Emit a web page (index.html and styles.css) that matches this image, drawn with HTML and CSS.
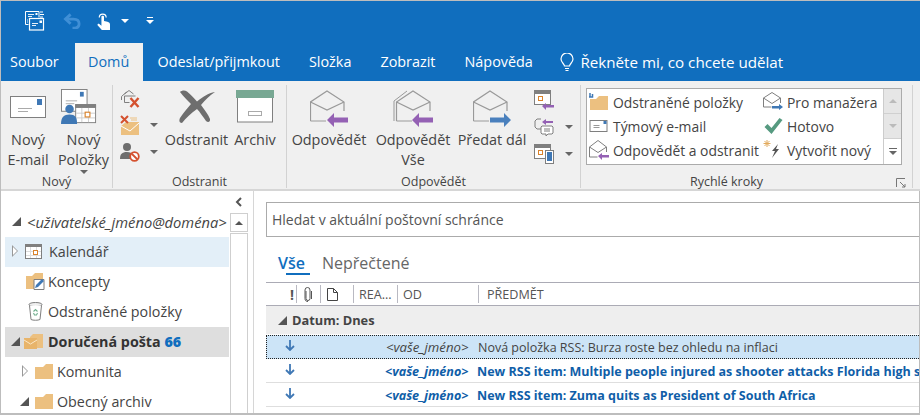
FILE: index.html
```html
<!DOCTYPE html>
<html lang="cs">
<head>
  <meta charset="UTF-8">
  <title>Doručená pošta - Outlook</title>
  <link rel="stylesheet" href="styles.css">
</head>
<body>
<div class="window">

  <!-- quick access bar -->
  <div class="qat">
    <svg width="20" height="20" viewBox="0 0 20 20" fill="none" stroke="#fff">
      <path d="M3.500 13.500H.5V.5H14v6"/>
      <path d="M3 3.500h6M3 5.500h4M2 9h1M2 11h1" stroke-width=".9"/>
      <path fill="#fff" stroke="none" d="M10.500 2h2v2h-2zM15 .5h3v1h-3zM15 3h4v1h-4zM15 5.500h3v1h-3z"/>
      <rect x="4.500" y="7.500" width="14" height="11.500" stroke-width="1.200"/>
      <path d="M7 12.500h6M7 14.500h4" stroke-width=".9"/>
      <path fill="#fff" stroke="none" d="M14.500 9.500h2.500v2.500h-2.500z"/>
    </svg>
    <svg class="qat-undo" width="19" height="16" viewBox="0 0 20 17" fill="none" stroke="#3f8fd6" stroke-width="3">
      <path d="M8 1.500 2.500 6.500 8 11.500"/><path d="M3 6.500h8c4 0 6 2 6 5s-2 4.500-5 4.500h-2"/>
    </svg>
    <svg class="qat-touch" width="14" height="18" viewBox="0 0 16 21">
      <path fill="none" stroke="#fff" stroke-width="1.400" d="M2.500 6.500a4 4 0 1 1 8 0"/>
      <path fill="#fff" d="M5 5.500c0-1.500 3-1.500 3 0v5l4 1c2 .5 3 1.500 3 3V21H5.500L.5 15.500c-.5-1.500 1-2.500 2-1.500L5 16z"/>
    </svg>
    <span class="caret caret-white qat-caret"></span>
    <span class="qat-more"><span class="qat-more-bar"></span><span class="caret caret-white"></span></span>
  </div>

  <!-- tabs -->
  <div class="tabs">
    <span class="tab tab-file">Soubor</span>
    <span class="tab tab-active">Domů</span>
    <span class="tab">Odeslat/přijmkout</span>
    <span class="tab">Složka</span>
    <span class="tab">Zobrazit</span>
    <span class="tab">Nápověda</span>
    <span class="tab tab-tell">
      <svg width="14" height="19" viewBox="0 0 14 19" fill="none" stroke="#fff" stroke-width="1.200">
        <path d="M4.500 13c0-2-3.500-3.500-3.500-7a6 6 0 0 1 12 0c0 3.500-3.500 5-3.500 7z"/><path d="M5 15.500h4M5.500 17.500h3"/>
      </svg>
      Řekněte mi, co chcete udělat
    </span>
  </div>

  <!-- ribbon -->
  <div class="ribbon">

    <div class="group group-new">
      <div class="group-body">
        <div class="big-btn btn-email">
          <div class="big-icon">
            <svg width="36" height="23" viewBox="0 0 36 23">
              <rect x=".5" y=".5" width="35" height="21" fill="#fff" stroke="#7f7f7f"/>
              <rect x="27" y="3" width="5" height="6" fill="#3f78b5"/>
              <path d="M8 12.500h14M8 15.500h10" stroke="#aaa"/>
            </svg>
          </div>
          <span class="big-label">Nový<br>E-mail</span>
        </div>
        <div class="big-btn btn-items">
          <div class="big-icon">
            <svg width="36" height="36" viewBox="0 0 38 38">
              <rect x=".5" y=".5" width="27" height="23" fill="#fff" stroke="#7f7f7f"/>
              <rect x="20" y="3" width="4" height="5" fill="#3f78b5"/>
              <path d="M5 12.500h12M5 15.500h9" stroke="#aaa"/>
              <rect x="15.500" y="16.500" width="21" height="19" fill="#fff" stroke="#7f7f7f"/>
              <rect x="15" y="16" width="22" height="4" fill="#7f7f7f"/>
              <path d="M22 20v15M29 20v15M16 25.500h20M16 30.500h20" stroke="#ccc"/>
              <rect x="25.500" y="24.500" width="5" height="5" fill="#fff" stroke="#d9822b" stroke-width="1.200"/>
              <circle cx="9" cy="21" r="4.500" fill="#3f78b5"/>
              <path d="M0 37c0-7 3-10 9-10s8 3 8 10z" fill="#3f78b5"/>
            </svg>
          </div>
          <span class="big-label">Nový<br>Položky</span>
          <span class="caret caret-gray"></span>
        </div>
      </div>
      <div class="group-label">Nový</div>
    </div>

    <div class="group group-delete">
      <div class="group-body">
        <div class="small-col col-delete">
          <div class="small-row">
            <svg width="20" height="19" viewBox="0 0 20 19" fill="none">
              <path d="M4.500 5 9 1.500 13.500 5M1.500 11V7.500L6.500 3M4.500 13.500V7h11M4.500 13.500h5" stroke="#7f7f7f"/>
              <path d="M10.500 9l8 9M18.500 9l-8 9" stroke="#d4512f" stroke-width="2.400"/>
            </svg>
          </div>
          <div class="small-row">
            <svg width="20" height="20" viewBox="0 0 20 20">
              <path d="M6 7h13v13H1v-9z" fill="#ecc080"/>
              <path d="M1 11l9 5 9-8" fill="none" stroke="#fff"/>
              <path d="M10 3h7M11 5h6" stroke="#ecc080"/>
              <path d="M1 1l7 7M8 1 1 8" stroke="#d4512f" stroke-width="2"/>
            </svg>
            <span class="caret caret-gray"></span>
          </div>
          <div class="small-row">
            <svg width="20" height="20" viewBox="0 0 20 20">
              <circle cx="7" cy="5" r="4" fill="#6e6e6e"/>
              <path d="M0 17c0-5 2-7 7-7 3 0 5 1 5 3v4z" fill="#6e6e6e"/>
              <circle cx="14.500" cy="14.500" r="4.300" fill="#fff" stroke="#d4512f" stroke-width="1.800"/>
              <path d="M11.500 11.500l6 6" stroke="#d4512f" stroke-width="1.800"/>
            </svg>
            <span class="caret caret-gray"></span>
          </div>
        </div>
        <div class="big-btn btn-delete">
          <div class="big-icon">
            <svg width="36" height="34" viewBox="0 0 36 34">
              <path d="M1 2c2-2 5-2 7-.500 4 3 7 7 10 10C24 7 29 3 36 2 30 6 26 10 22 15c3 4 7 9 9 14 .5 3-2 4-4 2-3-4-6-9-9-12C12 23 7 28 3 33 0 33 0 30 1 28c3-5 7-9 11-14C8 10 4 6 1 2z" fill="#6e6e6e"/>
            </svg>
          </div>
          <span class="big-label">Odstranit</span>
        </div>
        <div class="big-btn btn-archive">
          <div class="big-icon">
            <svg width="38" height="33" viewBox="0 0 38 33">
              <rect x="1.500" y="4" width="35" height="28" fill="#fff" stroke="#7f7f7f"/>
              <rect x="0" y="0" width="38" height="8" fill="#78a893"/>
              <rect x="12.500" y="21.500" width="13" height="4" fill="#fff" stroke="#aaa"/>
            </svg>
          </div>
          <span class="big-label">Archiv</span>
        </div>
      </div>
      <div class="group-label">Odstranit</div>
    </div>

    <div class="group group-respond">
      <div class="group-body">
        <div class="big-btn btn-reply">
          <div class="big-icon">
            <svg width="38" height="38" viewBox="0 0 38 38">
              <use href="#env-open"/>
              <path d="M17 30l7-7v4.500h14v5H24V37z" fill="#9461b4"/>
            </svg>
          </div>
          <span class="big-label">Odpovědět</span>
        </div>
        <div class="big-btn btn-replyall">
          <div class="big-icon">
            <svg width="40" height="38" viewBox="0 0 40 38">
              <path d="M14 1 1 11v20" fill="none" stroke="#999"/>
              <g transform="translate(3)"><use href="#env-open"/></g>
              <path d="M19 30l7-7v4.500h14v5H26V37z" fill="#9461b4"/>
            </svg>
          </div>
          <span class="big-label">Odpovědět<br>Vše</span>
        </div>
        <div class="big-btn btn-forward">
          <div class="big-icon">
            <svg width="38" height="38" viewBox="0 0 38 38">
              <use href="#env-open"/>
              <path d="M38 30l-7-7v4.500H17v5h14V37z" fill="#4a80bd"/>
            </svg>
          </div>
          <span class="big-label">Předat dál</span>
        </div>
        <div class="small-col col-respond">
          <div class="small-row">
            <svg width="20" height="20" viewBox="0 0 20 20">
              <rect x=".5" y=".5" width="16" height="14" fill="#fff" stroke="#7f7f7f"/>
              <rect x="0" y="0" width="17" height="4" fill="#7f7f7f"/>
              <rect x="4.500" y="6.500" width="4" height="4" fill="#fff" stroke="#d9822b"/>
              <path d="M8 16l4-3v2h8v2.500h-8V20z" fill="#9461b4"/>
            </svg>
          </div>
          <div class="small-row">
            <svg width="20" height="20" viewBox="0 0 20 20" fill="none">
              <path d="M7 12H3L1 10V4l2-2h4" stroke="#7f7f7f"/>
              <path d="M8 5l4-3v2h7v2h-7v2z" fill="#9461b4"/>
              <path d="M8 9h10l1 1v6l-1 1h-4l-2 2v-2H8l-1-1v-6z" fill="#fff" stroke="#7f7f7f"/>
              <path d="M10 12h6M10 14h6" stroke="#7f7f7f"/>
            </svg>
            <span class="caret caret-gray"></span>
          </div>
          <div class="small-row">
            <svg width="20" height="20" viewBox="0 0 20 20">
              <rect x=".5" y=".5" width="16" height="14" fill="#fff" stroke="#7f7f7f"/>
              <rect x="0" y="0" width="17" height="4" fill="#7f7f7f"/>
              <rect x="4.500" y="6.500" width="4" height="4" fill="#fff" stroke="#d9822b"/>
              <rect x="11.500" y="6.500" width="8" height="13" fill="#fff" stroke="#7f7f7f"/>
              <rect x="13" y="8" width="5" height="9" fill="#3f78b5"/>
            </svg>
            <span class="caret caret-gray"></span>
          </div>
        </div>
      </div>
      <div class="group-label">Odpovědět</div>
    </div>

    <div class="group group-steps">
      <div class="group-body">
        <div class="gallery">
          <div class="steps">
            <div class="step">
              <svg width="20" height="18" viewBox="0 0 20 18">
                <path d="M1 6h6l3-3h9v14H1z" fill="#ecc080"/>
                <path d="M1 0v3.500M3.500 1v3h-4" fill="none" stroke="#3f78b5" stroke-width="1.500"/>
              </svg>
              <span>Odstraněné položky</span>
            </div>
            <div class="step">
              <svg width="19" height="18" viewBox="0 0 19 18" fill="none">
                <rect x=".5" y="3.500" width="17" height="11" fill="#fff" stroke="#7f7f7f"/>
                <path d="M4 8.500h6M4 10.500h6" stroke="#999"/>
                <rect x="14" y="4" width="3" height="3" fill="#3f78b5"/>
              </svg>
              <span>Týmový e-mail</span>
            </div>
            <div class="step">
              <svg width="20" height="20" viewBox="0 0 20 20" fill="none">
                <path d="M.5 17V7L9 .5 17.500 7v5M.5 7 9 12.500 17.500 7M.5 17h8" stroke="#7f7f7f"/>
                <path d="M9 16l4-3v2h7v2.500h-7V20z" fill="#9461b4"/>
              </svg>
              <span>Odpovědět a odstranit</span>
            </div>
            <div class="step">
              <svg width="20" height="20" viewBox="0 0 20 20" fill="none">
                <path d="M.5 15V6L9 .5 17.500 6v5M.5 6 9 11.500 17.500 6M.5 15h8" stroke="#7f7f7f"/>
                <path d="M20 15l-4-3v2H9v2.500h7V18z" fill="#3f78b5"/>
              </svg>
              <span>Pro manažera</span>
            </div>
            <div class="step">
              <svg width="19" height="18" viewBox="0 0 19 18">
                <path d="M1 10l3-3 4 4L16 1l3 2-11 14z" fill="#569a80"/>
              </svg>
              <span>Hotovo</span>
            </div>
            <div class="step">
              <svg width="20" height="20" viewBox="0 0 20 20">
                <path d="M4 0v7M.5 3.500h7M1.500 1l5 5M6.500 1l-5 5" stroke="#e2aa5c" fill="none"/>
                <path d="M15 4 9 11h3l-3 7 7-9h-3z" fill="#555"/>
              </svg>
              <span>Vytvořit nový</span>
            </div>
          </div>
          <div class="gallery-scroll">
            <span class="scroll-btn"><span class="caret caret-up caret-pale"></span></span>
            <span class="scroll-btn"><span class="caret caret-pale"></span></span>
            <span class="scroll-more"><span class="more-bar"></span><span class="caret caret-gray"></span></span>
          </div>
        </div>
      </div>
      <div class="group-label">Rychlé kroky</div>
      <svg class="launcher" width="10" height="10" viewBox="0 0 10 10" fill="none" stroke="#777">
        <path d="M.5 9V.5H9"/><path d="M4 4l5 5M9 6v3H6"/>
      </svg>
    </div>
  </div>

  <!-- shared envelope shape -->
  <svg class="defs" width="0" height="0">
    <defs>
      <g id="env-open" fill="none" stroke="#999" stroke-width="1.200">
        <path d="M.5 31V12L17 1l17 11v9M.5 31H16"/>
        <path d="M.5 12 17 20l17-8"/>
      </g>
    </defs>
  </svg>

  <div class="main">
    <!-- folder pane -->
    <div class="nav">
      <div class="nav-tree">
        <div class="nav-account">
          <span class="tri-open"></span>
          <em>&lt;uživatelské_jméno@doména&gt;</em>
        </div>
        <div class="nav-row nav-hover">
          <span class="tri-closed"></span>
          <svg width="17" height="15" viewBox="0 0 17 15">
            <rect x=".5" y=".5" width="16" height="14" fill="#fff" stroke="#7f7f7f"/>
            <rect x="0" y="0" width="17" height="3" fill="#7f7f7f"/>
            <path d="M5.500 3v11M11.500 3v11M1 7.500h15M1 11.500h15" stroke="#ddd"/>
            <rect x="8.500" y="6.500" width="4" height="4" fill="#fff" stroke="#d9822b"/>
          </svg>
          <span>Kalendář</span>
        </div>
        <div class="nav-row nav-plain">
          <svg width="19" height="18" viewBox="0 0 19 18">
            <path d="M0 4h6l3-3h8v16H0z" fill="#ecc080"/>
            <path d="M8 7.500h10v10H8z" fill="#fff" stroke="#7f7f7f"/>
            <path d="M9 16l1-3 6-6 2 2-6 6z" fill="#3f78b5"/>
          </svg>
          <span>Koncepty</span>
        </div>
        <div class="nav-row nav-plain">
          <svg width="15" height="19" viewBox="0 0 15 19" fill="none" stroke="#7f7f7f">
            <path d="M1 3.500h13"/><ellipse cx="7.500" cy="2.500" rx="6.500" ry="2" fill="#eee"/>
            <path d="M1.500 3.500 3 17.500c2 1 7 1 9 0l1.500-14" fill="#fff"/>
            <path d="M5.500 9.500l2-2 2 2M9.500 11l-1 2h-2l-1-2" stroke="#6fae8d" stroke-width="1.100"/>
          </svg>
          <span>Odstraněné položky</span>
        </div>
        <div class="nav-row nav-selected">
          <span class="tri-open"></span>
          <svg width="20" height="16" viewBox="0 0 20 16">
            <path d="M6 4l3-3h10v14H6z" fill="#ecc080"/>
            <path d="M0 5h13v11H0z" fill="#e8b46a"/>
            <path d="M0 7l6.500 4L13 7" fill="none" stroke="#fbe7c6"/>
          </svg>
          <span class="nav-inbox">Doručená pošta <b>66</b></span>
        </div>
        <div class="nav-row nav-child">
          <span class="tri-closed"></span>
          <svg class="folder" width="18" height="16" viewBox="0 0 18 16"><path d="M0 4h8l3-3h7v15H0z" fill="#ecc080"/></svg>
          <span>Komunita</span>
        </div>
        <div class="nav-row nav-child">
          <span class="tri-open"></span>
          <svg class="folder" width="18" height="16" viewBox="0 0 18 16"><path d="M0 4h8l3-3h7v15H0z" fill="#ecc080"/></svg>
          <span>Obecný archiv</span>
        </div>
      </div>
      <div class="nav-side">
        <svg class="nav-collapse" width="8" height="10" viewBox="0 0 8 10" fill="none" stroke="#555" stroke-width="2">
          <path d="M6 1 2 5l4 4"/>
        </svg>
        <div class="nav-scroll">
          <span class="nav-scroll-up"><span class="caret caret-up caret-dark"></span></span>
          <span class="nav-scroll-track"></span>
        </div>
      </div>
    </div>

    <!-- mail list -->
    <div class="content">
      <div class="search-wrap">
        <div class="search">Hledat v aktuální poštovní schránce</div>
      </div>
      <div class="filters">
        <span class="filter filter-on">Vše</span>
        <span class="filter">Nepřečtené</span>
      </div>
      <div class="list">
        <div class="list-head">
          <span class="col col-imp">!</span>
          <span class="col col-clip">
            <svg width="10" height="15" viewBox="0 0 10 15" fill="none" stroke="#555">
              <path d="M3 4v7.500a2 2 0 0 0 4 0V3a2.500 2.500 0 0 0-5 0v8.500c0 2 1 3 3 3"/><path d="M8.500 4v8"/>
            </svg>
          </span>
          <span class="col col-doc">
            <svg width="11" height="13" viewBox="0 0 11 13" fill="none" stroke="#444">
              <path d="M.5.5h6l4 4v8H.5zM6.500.5v4h4"/>
            </svg>
          </span>
          <span class="col col-read">REA...</span>
          <span class="col col-from">OD</span>
          <span class="col col-subject">PŘEDMĚT</span>
        </div>
        <div class="list-group">
          <span class="tri-open"></span>
          Datum: Dnes
        </div>
        <div class="mail mail-selected">
          <svg class="mail-arrow" width="10" height="11" viewBox="0 0 10 11" fill="none" stroke="#3f78b5" stroke-width="1.800">
            <path d="M5 0v10M1 6l4 4 4-4"/>
          </svg>
          <em class="mail-from">&lt;vaše_jméno&gt;</em>
          <span class="mail-subject">Nová položka RSS: Burza roste bez ohledu na inflaci</span>
        </div>
        <div class="mail mail-unread">
          <svg class="mail-arrow" width="10" height="11" viewBox="0 0 10 11" fill="none" stroke="#3f78b5" stroke-width="1.800">
            <path d="M5 0v10M1 6l4 4 4-4"/>
          </svg>
          <em class="mail-from">&lt;vaše_jméno&gt;</em>
          <span class="mail-subject">New RSS item: Multiple people injured as shooter attacks Florida high school</span>
        </div>
        <div class="mail mail-unread">
          <svg class="mail-arrow" width="10" height="11" viewBox="0 0 10 11" fill="none" stroke="#3f78b5" stroke-width="1.800">
            <path d="M5 0v10M1 6l4 4 4-4"/>
          </svg>
          <em class="mail-from">&lt;vaše_jméno&gt;</em>
          <span class="mail-subject">New RSS item: Zuma quits as President of South Africa</span>
        </div>
      </div>
    </div>
  </div>
</div>
</body>
</html>
```
FILE: styles.css
```css
* {
  box-sizing: border-box;
}
html, body {
  margin: 0;
  height: 100%;
  overflow: hidden;
}
body {
  font-family: "Open Sans", "Noto Sans", sans-serif;
  font-size: 14px;
  color: #444;
  background: #fff;
}
svg {
  display: block;
  flex: none;
}
.defs {
  position: absolute;
}

.window {
  width: 920px;
  height: 415px;
  display: flex;
  flex-direction: column;
  border: 1px solid #bdbdbd;
  border-right: 0;
  overflow: hidden;
}

/* carets */
.caret {
  display: block;
  width: 0;
  height: 0;
  border-left: 4px solid transparent;
  border-right: 4px solid transparent;
  border-top: 4px solid #666;
}
.caret-white {
  border-top-color: #fff;
}
.caret-up {
  border-top: 0;
  border-bottom: 4px solid #666;
}
.caret-pale {
  border-top-color: #bbb;
  border-bottom-color: #bbb;
}
.caret-dark {
  border-bottom-color: #555;
}

/* title bar */
.qat {
  height: 42px;
  flex: none;
  background: #106ebe;
  display: flex;
  align-items: center;
  padding: 0 0 3px 24px;
}
.qat-undo {
  margin-left: 18px;
}
.qat-touch {
  margin-left: 15px;
}
.qat-caret {
  margin-left: 10px;
}
.qat-more {
  margin-left: 17px;
  display: flex;
  flex-direction: column;
  gap: 2px;
}
.qat-more-bar {
  width: 6px;
  height: 1px;
  margin-left: 1px;
  background: #fff;
}

.tabs {
  height: 38px;
  flex: none;
  background: #106ebe;
  display: flex;
  color: #fff;
  font-size: 14.4px;
}
.tab {
  padding: 0 14.5px;
  line-height: 37px;
}
.tab-file {
  width: 74px;
  padding: 0 0 0 9px;
}
.tab-active {
  background: #f0f0f0;
  color: #106ebe;
  width: 68px;
  padding: 0 0 0 13px;
}
.tab-tell {
  display: flex;
  align-items: center;
  gap: 6px;
  padding-left: 13px;
  font-size: 15.2px;
  white-space: nowrap;
}

/* ribbon */
.ribbon {
  height: 110px;
  flex: none;
  background: #f0f0f0;
  border-bottom: 2px solid #d6d6d6;
  display: flex;
  padding: 4px 0 1px;
}
.group {
  position: relative;
  display: flex;
  flex-direction: column;
  border-right: 1px solid #d2d2d2;
}
.group-new {
  width: 112px;
}
.group-delete {
  width: 174px;
}
.group-respond {
  width: 294px;
}
.group-steps {
  width: 332px;
}
.group-body {
  flex: 1;
  display: flex;
  min-height: 0;
}
.group-label {
  height: 17px;
  padding-top: 3px;
  line-height: 15px;
  text-align: center;
  font-size: 12.5px;
  flex: none;
}
.group-steps .group-label {
  padding-right: 40px;
}
.launcher {
  position: absolute;
  right: 6px;
  bottom: 0;
}
.big-btn {
  display: flex;
  flex-direction: column;
  align-items: center;
  flex: none;
}
.big-icon {
  height: 45px;
  flex: none;
  display: flex;
  align-items: flex-end;
  padding-bottom: 2px;
}
.big-label {
  line-height: 20px;
  text-align: center;
  white-space: nowrap;
  font-size: 14.4px;
}
.btn-email {
  width: 54px;
}
.btn-email .big-icon {
  padding-bottom: 11px;
}
.btn-items {
  width: 57px;
}
.btn-items .big-icon {
  padding: 0 10px 5px 0;
}
.btn-delete {
  width: 63px;
}
.btn-delete .big-icon {
  padding-bottom: 6px;
}
.btn-archive {
  width: 54px;
}
.btn-archive .big-icon {
  padding-bottom: 7px;
}
.btn-reply, .btn-replyall {
  width: 84px;
}
.btn-forward {
  width: 74px;
}
.small-col {
  flex: none;
  display: flex;
  flex-direction: column;
  gap: 5px;
  padding-top: 2px;
}
.small-row {
  height: 22px;
  display: flex;
  align-items: center;
  gap: 10px;
}
.col-delete {
  width: 52px;
  padding-left: 7px;
}
.col-respond {
  width: 51px;
  padding: 4px 0 0 5px;
}
.col-respond .small-row {
  gap: 11px;
}

/* quick steps */
.gallery {
  margin: 3px 0 0 5px;
  width: 316px;
  height: 77px;
  display: flex;
  background: #fff;
  border: 1px solid #ababab;
}
.steps {
  flex: 1;
  display: grid;
  grid-template-columns: 174px 1fr;
  grid-template-rows: repeat(3, 24px);
  grid-auto-flow: column;
  padding-top: 1px;
}
.step {
  display: flex;
  align-items: center;
  gap: 4px;
  padding-left: 2px;
  white-space: nowrap;
  font-size: 13.9px;
}
.step svg {
  width: 20px;
}
.gallery-scroll {
  width: 18px;
  flex: none;
  display: flex;
  flex-direction: column;
  border-left: 1px solid #ccc;
}
.scroll-btn {
  height: 25px;
  background: #e6e6e6;
  border-bottom: 1px solid #d0d0d0;
  display: flex;
  align-items: center;
  justify-content: center;
}
.scroll-more {
  flex: 1;
  display: flex;
  flex-direction: column;
  align-items: center;
  justify-content: center;
  gap: 2px;
}
.more-bar {
  width: 8px;
  height: 1px;
  background: #666;
}

/* main area */
.main {
  flex: 1;
  display: flex;
  min-height: 0;
  border-bottom: 1px solid #bdbdbd;
}
.nav {
  width: 253px;
  flex: none;
  display: flex;
  border-right: 1px solid #d6d6d6;
  font-size: 14.3px;
}
.nav-tree {
  width: 228px;
  flex: none;
  padding-top: 15px;
}
.nav-account {
  height: 31px;
  display: flex;
  align-items: center;
  gap: 6px;
  padding-left: 11px;
  font-size: 14.7px;
  white-space: nowrap;
}
.nav-row {
  height: 30px;
  margin-left: 4px;
  display: flex;
  align-items: center;
  padding: 0 0 2px 8px;
  gap: 4px;
}
.nav-hover {
  background: #e3eff8;
  padding-left: 7px;
  gap: 7px;
}
.nav-plain {
  padding-left: 21px;
  gap: 3px;
}
.nav-plain svg {
  width: 19px;
}
.nav-selected {
  background: #dedede;
  padding-left: 6px;
  gap: 4px;
}
.nav-inbox {
  font-weight: 700;
  color: #333;
}
.nav-inbox b {
  color: #106ebe;
}
.nav-child {
  display: grid;
  grid-template-columns: 9px 20px 1fr;
  gap: 4px;
  padding-left: 15px;
}
.nav-child .folder {
  justify-self: end;
}
.nav-child .tri-closed, .nav-child .tri-open {
  justify-self: center;
}
.tri-open {
  display: block;
  flex: none;
  width: 0;
  height: 0;
  border-bottom: 9px solid #555;
  border-left: 9px solid transparent;
}
.tri-closed {
  display: block;
  flex: none;
  width: 0;
  height: 0;
  border-left: 6px solid #999;
  border-top: 6px solid transparent;
  border-bottom: 6px solid transparent;
  position: relative;
}
.tri-closed::after {
  content: "";
  position: absolute;
  left: -5px;
  top: -4px;
  border-left: 4px solid #fff;
  border-top: 4px solid transparent;
  border-bottom: 4px solid transparent;
}
.nav-side {
  flex: 1;
  display: flex;
  flex-direction: column;
  padding-left: 1px;
}
.nav-collapse {
  margin: 6px 0 0 5px;
}
.nav-scroll {
  width: 18px;
  margin-top: 6px;
  flex: 1;
  display: flex;
  flex-direction: column;
}
.nav-scroll-up {
  height: 19px;
  border: 1px solid #cfcfcf;
  display: flex;
  align-items: center;
  justify-content: center;
}
.nav-scroll-track {
  flex: 1;
  border: 1px solid #cfcfcf;
  border-bottom: 0;
  margin-top: 1px;
}

.content {
  flex: 1;
  min-width: 0;
  border-right: 1px solid #bdbdbd;
  padding-top: 11px;
  display: flex;
  flex-direction: column;
}
.search-wrap {
  padding-left: 12px;
}
.search {
  height: 35px;
  border: 1px solid #ababab;
  border-right: 0;
  line-height: 34px;
  padding-left: 5px;
  color: #555;
}
.filters {
  height: 45px;
  padding: 16px 0 0 24px;
  display: flex;
  gap: 12px;
  font-size: 16px;
  color: #666;
}
.filter {
  line-height: 20px;
}
.filter-on {
  color: #106ebe;
  font-weight: 600;
}
.filter-on::after {
  content: "";
  display: block;
  width: 24px;
  height: 2px;
  margin-left: 8px;
  background: #106ebe;
}
.list {
  flex: 1;
  margin-left: 12px;
  overflow: hidden;
}
.list-head {
  height: 24px;
  border-top: 1px solid #ababb5;
  border-bottom: 1px solid #ababb5;
  display: grid;
  grid-template-columns: 30px 24px 33px 44px 81px 1fr;
  align-items: center;
  font-size: 12.6px;
  color: #555;
}
.col {
  display: flex;
  align-items: center;
  height: 18px;
  padding-left: 5px;
  border-left: 1px solid #b9b9c2;
  white-space: nowrap;
}
.col-imp {
  border-left: 0;
  justify-content: flex-end;
  padding-right: 2px;
  font-weight: 700;
  font-size: 14px;
}
.col-clip {
  padding-left: 6px;
}
.col-doc {
  padding-left: 6px;
}
.col-subject {
  padding-left: 8px;
}
.list-group {
  height: 28px;
  background: #eeeeee;
  display: flex;
  align-items: center;
  gap: 5px;
  padding-left: 12px;
  font-size: 12.8px;
  font-weight: 700;
}
.mail {
  height: 24px;
  display: grid;
  grid-template-columns: 119px 92px 1fr;
  align-items: center;
  border-bottom: 1px solid #dedede;
  font-size: 12.5px;
  white-space: nowrap;
}
.mail-arrow {
  margin: 0 0 3px 19px;
}
.mail-from {
  font-size: 13.2px;
}
.mail-subject {
  overflow: hidden;
}
.mail-selected {
  margin-top: 1px;
  background: #cce4f7;
  border: 1px dotted #222;
  border-right: 0;
}
.mail-selected .mail-arrow {
  margin-left: 18px;
}
.mail-unread {
  color: #0f5ea8;
  font-weight: 700;
  padding-top: 1px;
}
.mail-unread .mail-from {
  font-size: 12.6px;
}
```
